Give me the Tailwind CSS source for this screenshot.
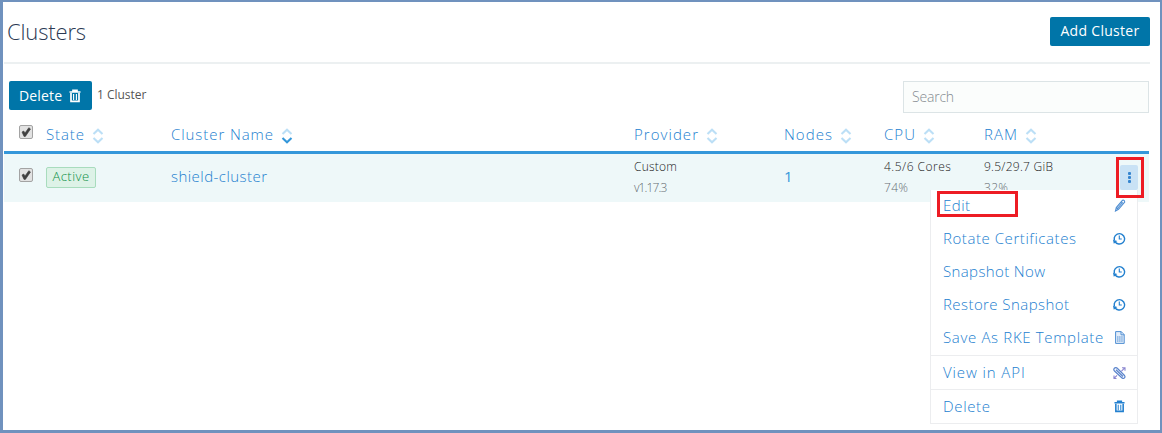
<!DOCTYPE html>
<html lang="en">
<head>
<meta charset="utf-8">
<title>Clusters</title>
<script src="https://cdn.jsdelivr.net/npm/@tailwindcss/browser@4"></script>
</head>
<body class="bg-white">
<svg class="hidden">
  <symbol id="sort" viewBox="0 0 12 16"><path d="M1.5 6 6 1.8 10.500 6" fill="none" stroke="#bcdff6" stroke-width="2.1"/><path d="M1.500 10 6 14.200 10.500 10" fill="none" stroke="currentColor" stroke-width="2.100"/></symbol>
  <symbol id="trash" viewBox="0 0 12 14"><path d="M.5 3h11M4 3V1.300h4V3" fill="none" stroke="currentColor" stroke-width="1.700"/><path d="M2 4v8.300h8V4" fill="none" stroke="currentColor" stroke-width="1.700"/><path d="M4.600 5v6M7.400 5v6" stroke="currentColor" stroke-width="1.100"/></symbol>
  <symbol id="history" viewBox="0 0 13 13"><path d="M1.800 9.300A5.200 5.200 0 1 0 1.300 5.700V8" fill="none" stroke="currentColor" stroke-width="1.400"/><path d="M0 7.800 4.300 9 .8 11.800z" fill="currentColor"/><path d="M6.300 3.500V7H8.800" fill="none" stroke="currentColor" stroke-width="1.100"/></symbol>
  <symbol id="check" viewBox="0 0 14 14"><rect x=".5" y=".5" width="13" height="13" rx="1.500" fill="#e2e2e2" stroke="#a3a3a3"/><path d="M3 7 4.700 6 6 8 9.800 2.700 11.500 4 6.400 11.400H5z" fill="#404040" stroke="#404040" stroke-width=".6"/></symbol>
</svg>
<main class="relative flex h-[433px] w-[1162px] flex-col border-t-2 border-r-2 border-b-3 border-l-3 border-[#7092be] pr-[10px] pl-px font-['Open_Sans',sans-serif] font-light text-[#3d3d3d]">
  <header class="flex h-[62px] items-center justify-between border-b-2 border-[#ecf0f1] pl-[3px]">
    <h1 class="pb-[3px] text-[22px] leading-7 tracking-[-0.15px] text-[#2c3a54]">Clusters</h1>
    <button class="mb-[2px] h-[29px] w-[100px] rounded-[2px] bg-[#0075a8] text-[14px] leading-none font-normal tracking-[0.3px] text-white">Add Cluster</button>
  </header>

  <div class="flex h-[49px] items-start pt-[17px] pr-px pl-[5px]">
    <button class="flex h-[29px] w-[83px] items-center gap-[7px] rounded-[2px] bg-[#0075a8] pl-[10px] text-[14px] font-normal tracking-[0.15px] text-white">Delete <svg class="mt-px h-[14px] w-3"><use href="#trash"/></svg></button>
    <span class="ml-[5px] text-[12px] leading-7 font-normal tracking-[-0.02px] text-[#555]">1 Cluster</span>
    <div class="ml-auto flex h-8 w-[246px] items-center border border-[#dce4e6] bg-[#fbfdfc] pb-[2px] pl-2 text-[14px] tracking-[-0.2px] text-[#858c91]">Search</div>
  </div>

  <section class="mr-px">
    <div class="grid h-[41px] grid-cols-[42px_125px_463px_150px_100px_100px_1fr] items-center border-b-3 border-[#3497da] pt-[4px] text-[15px] leading-5 text-[#2380cf]">
      <svg class="mb-[5px] ml-[15px] size-[14px]"><use href="#check"/></svg>
      <div class="flex items-center gap-[7px] tracking-[0.9px]">State<svg class="mt-[4px] h-4 w-3 text-[#bcdff6]"><use href="#sort"/></svg></div>
      <div class="flex items-center gap-[7px] tracking-[0.93px]">Cluster Name<svg class="mt-[4px] h-4 w-3 text-[#3497da]"><use href="#sort"/></svg></div>
      <div class="flex items-center gap-[7px] tracking-[1.04px]">Provider<svg class="mt-[4px] h-4 w-3 text-[#bcdff6]"><use href="#sort"/></svg></div>
      <div class="flex items-center gap-[7px] tracking-[1.05px]">Nodes<svg class="mt-[4px] h-4 w-3 text-[#bcdff6]"><use href="#sort"/></svg></div>
      <div class="flex items-center gap-[7px] tracking-[1.06px]">CPU<svg class="mt-[4px] h-4 w-3 text-[#bcdff6]"><use href="#sort"/></svg></div>
      <div class="flex items-center gap-[7px] tracking-[1.06px]">RAM<svg class="mt-[4px] h-4 w-3 text-[#bcdff6]"><use href="#sort"/></svg></div>
    </div>
    <div class="grid h-12 grid-cols-[42px_125px_463px_150px_100px_100px_1fr_46px] items-center bg-[#eef8f9] text-[12px] text-[#222]">
      <svg class="mb-[6px] ml-[15px] size-[14px]"><use href="#check"/></svg>
      <span class="mb-[2px] flex h-[21px] w-[50px] items-center justify-center rounded-[2px] border border-[#a8dcbd] bg-[#ddf2e7] text-[13px] tracking-[0.45px] text-[#0f9147]">Active</span>
      <span class="mb-[4px] text-[15px] leading-5 tracking-[0.46px] text-[#2380cf]">shield-cluster</span>
      <div class="pb-[2px] leading-[21px]"><div class="tracking-[0.24px]">Custom</div><div class="tracking-[-0.9px] text-[#656c72]">v1.17.3</div></div>
      <span class="mb-[4px] text-[15px] leading-5 font-normal text-[#3497da]">1</span>
      <div class="pb-[2px] leading-[21px]"><div class="tracking-[0.5px]">4.5/6 Cores</div><div class="tracking-[0.3px] text-[#656c72]">74%</div></div>
      <div class="pb-[2px] leading-[21px]"><div class="tracking-[0.26px]">9.5/29.7 GiB</div><div class="tracking-[0.3px] text-[#656c72]">32%</div></div>
      <button class="mr-[11px] mb-px ml-auto flex h-[25px] w-[18px] flex-col items-center justify-center gap-px rounded-[2px] bg-[#c9e2f5] text-[#3585cf]"><i class="size-[3px] rounded-[1px] bg-current"></i><i class="size-[3px] rounded-[1px] bg-current"></i><i class="size-[3px] rounded-[1px] bg-current"></i></button>
    </div>
  </section>

  <nav class="absolute top-[188px] left-[927px] flex h-[234px] w-[208px] flex-col border border-t-0 border-[#ecedef] bg-white text-[15px] text-[#2380cf]">
    <div class="flex h-[166px] flex-col border-b border-[#ecedef] pr-[11px] pl-3">
      <a class="flex h-[33px] shrink-0 items-center justify-between pb-[2px] tracking-[0.46px]">Edit<svg class="h-[13px] w-3" viewBox="0 0 12 13"><path d="M1.500 12 2.300 8.600 8.500 1.300Q10.500.7 10.700 3L4.500 10.300zM3.500 9.500l5-6M2.300 8.600l2.200 1.700M7.200 2.900l2.200 1.700" fill="none" stroke="#4f8ed2" stroke-width="1.100"/></svg></a>
      <a class="flex h-[33px] shrink-0 items-center justify-between pb-[2px] tracking-[0.56px]">Rotate Certificates<svg class="size-[13px]"><use href="#history"/></svg></a>
      <a class="flex h-[33px] shrink-0 items-center justify-between pb-[2px] tracking-[0.37px]">Snapshot Now<svg class="size-[13px]"><use href="#history"/></svg></a>
      <a class="flex h-[33px] shrink-0 items-center justify-between pb-[2px] tracking-[0.43px]">Restore Snapshot<svg class="size-[13px]"><use href="#history"/></svg></a>
      <a class="flex h-[33px] shrink-0 items-center justify-between pb-[2px] tracking-[0.66px]"><span class="whitespace-nowrap">Save As RKE Template</span><svg class="mr-px h-[13px] w-[10px] shrink-0" viewBox="0 0 10 13"><path d="M.6.6h5.600l3 3v8.800H.6zM6 .6v3.200h3.200" fill="#e3edf9" stroke="#4f8ed2" stroke-width="1"/><path d="M2 6h6M2 8h6M2 10h6" stroke="#4f8ed2" stroke-width="1" stroke-dasharray="1.500 .6"/></svg></a>
    </div>
    <a class="flex h-[34px] shrink-0 items-center justify-between border-b border-[#ecedef] pr-[11px] pl-3 tracking-[0.9px]">View in API<svg class="h-3 w-[13px]" viewBox="0 0 13 12"><path d="M1.300 1.300Q3-.2 4.500 1.500L11.500 8.500Q12.500 10 11.300 11 10 12 8.500 10.500L1.500 4Q.2 2.600 1.300 1.300zM3 2.800l7 6.700" fill="none" stroke="#5a84cc" stroke-width="1.200"/><path d="M1 11.300 4 8.300M8.300 4.300 11.500 1.200M9 .8h3v3M1 8.500v3h2.500" fill="none" stroke="#8a86d0" stroke-width="1.100"/></svg></a>
    <a class="flex h-[33px] items-center justify-between pr-[11px] pb-px pl-3 tracking-[0.66px]">Delete<svg class="mr-px h-[13px] w-[11px]"><use href="#trash"/></svg></a>
  </nav>

  <div class="absolute top-[189px] left-[934px] h-[26px] w-[81px] border-3 border-[#ed1c24]"></div>
  <div class="absolute top-[155px] left-[1113px] h-[41px] w-7 border-3 border-[#ed1c24]"></div>
</main>
</body>
</html>
